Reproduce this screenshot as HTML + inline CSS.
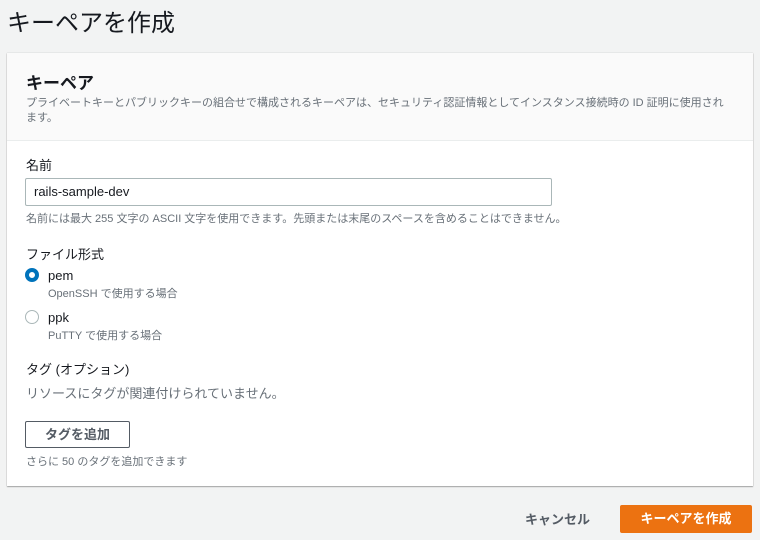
<!DOCTYPE html>
<html><head><meta charset="utf-8"><style>
*{margin:0;padding:0;box-sizing:border-box}
body{width:760px;height:540px;background:#f2f3f3;font-family:"Liberation Sans","Noto Sans CJK JP",sans-serif;color:#16191f;position:relative;overflow:hidden}
.a{position:absolute;white-space:nowrap}
.panel{position:absolute;left:7px;top:53px;width:746px;height:433px;background:#fff;box-shadow:0 1px 1px rgba(0,0,0,.3),0 0 1px rgba(0,0,0,.25)}
.hdr{position:absolute;left:0;top:0;width:746px;height:88px;background:#fafafa;border-bottom:1px solid #eaeded}
.s{font-size:11px;color:#687078}
.radio{position:absolute;width:14px;height:14px;border-radius:50%}
</style></head><body>
<div class="a" style="left:7px;top:3px;font-size:24px;color:#16191f">キーペアを作成</div>
<div class="panel">
<div class="hdr"></div>
<div class="a" style="left:19px;top:16px;font-size:17px;font-weight:bold">キーペア</div>
<div class="a s" style="left:19px;top:41px">プライベートキーとパブリックキーの組合せで構成されるキーペアは、セキュリティ認証情報としてインスタンス接続時の ID 証明に使用され</div>
<div class="a s" style="left:19px;top:56px">ます。</div>
<div class="a" style="left:19px;top:102px;font-size:13px">名前</div>
<div class="a" style="left:18px;top:125px;width:527px;height:28px;border:1px solid #aab7b8;border-radius:2px;font-size:13px;padding:5px 8px">rails-sample-dev</div>
<div class="a s" style="left:19px;top:157px">名前には最大 255 文字の ASCII 文字を使用できます。先頭または末尾のスペースを含めることはできません。</div>
<div class="a" style="left:19px;top:191px;font-size:13px">ファイル形式</div>
<div class="radio" style="left:18px;top:215px;border:4px solid #0073bb;background:#fff"></div>
<div class="a" style="left:41px;top:215px;font-size:13px">pem</div>
<div class="a s" style="left:41px;top:232px">OpenSSH で使用する場合</div>
<div class="radio" style="left:18px;top:257px;border:1px solid #aab7b8;background:#fff"></div>
<div class="a" style="left:41px;top:257px;font-size:13px">ppk</div>
<div class="a s" style="left:41px;top:274px">PuTTY で使用する場合</div>
<div class="a" style="left:19px;top:306px;font-size:13px">タグ (オプション)</div>
<div class="a" style="left:19px;top:330px;font-size:13px;color:#687078">リソースにタグが関連付けられていません。</div>
<div class="a" style="left:18px;top:368px;width:105px;height:27px;border:1px solid #545b64;border-radius:2px;font-size:13px;font-weight:bold;color:#545b64;text-align:center;line-height:25px">タグを追加</div>
<div class="a s" style="left:19px;top:400px">さらに 50 のタグを追加できます</div>
</div>
<div class="a" style="left:525px;top:509px;font-size:13px;font-weight:bold;color:#545b64">キャンセル</div>
<div class="a" style="left:620px;top:505px;width:132px;height:28px;background:#ec7211;border-radius:2px;color:#fff;font-size:13px;font-weight:bold;text-align:center;line-height:28px">キーペアを作成</div>
</body></html>
